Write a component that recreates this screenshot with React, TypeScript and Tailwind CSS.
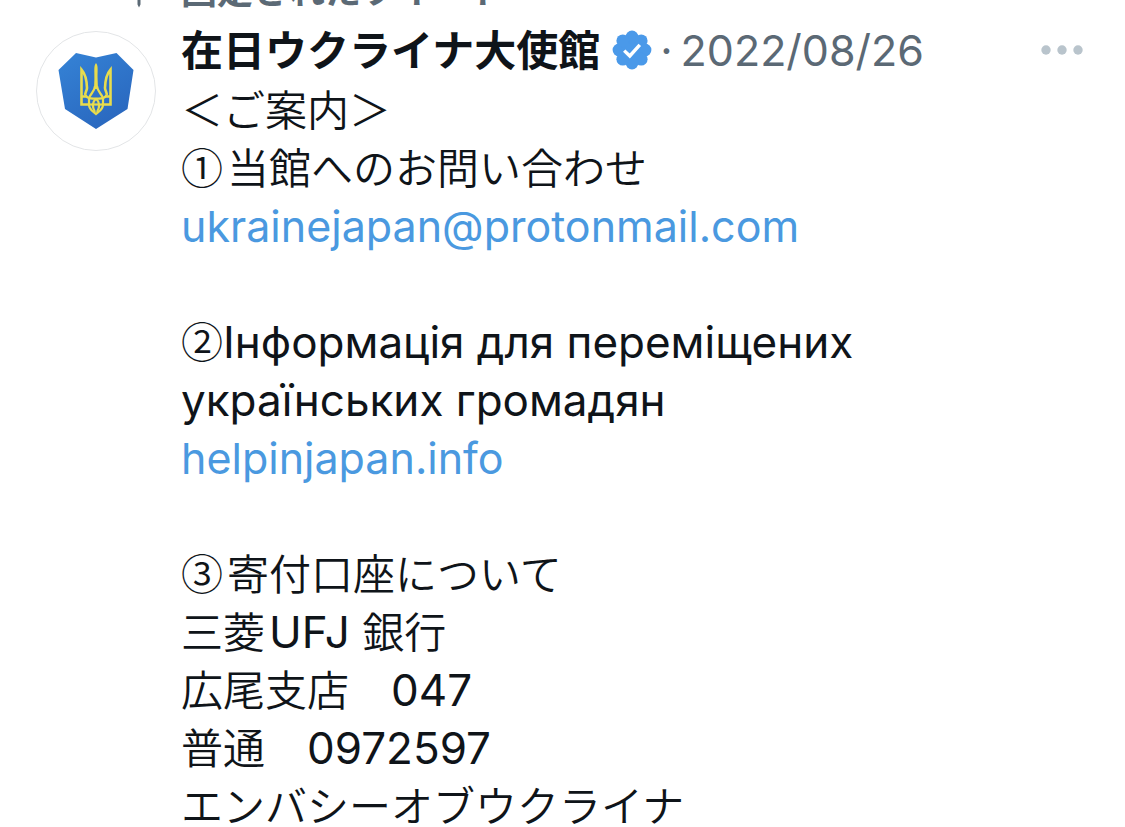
import type { ReactNode } from "react";

// A pinned tweet as it sits in a profile timeline, scrolled so that the
// "pinned" label is partly above the top edge.

// Japanese runs are set lighter and a touch smaller than the Latin and
// Cyrillic runs. leading-none keeps the taller CJK box from stretching a line.
function Ja({ children }: { children: ReactNode }) {
  return (
    <span
      lang="ja"
      className="font-['Noto_Sans_CJK_JP',sans-serif] text-[42px] leading-none font-[350]"
    >
      {children}
    </span>
  );
}

function TweetLink({ href, children }: { href: string; children: ReactNode }) {
  return (
    <a href={href} className="text-[43px] leading-none text-[#4a99e0]">
      {children}
    </a>
  );
}

function PinIcon() {
  return (
    <svg viewBox="0 0 24 24" className="size-9" fill="#5b6975" aria-hidden="true">
      <path d="M7 4.5C7 3.12 8.12 2 9.5 2h5C15.88 2 17 3.12 17 4.5v5.26L20.12 16H13v5l-1 2-1-2v-5H3.88L7 9.76V4.5z" />
    </svg>
  );
}

function VerifiedIcon() {
  return (
    <svg viewBox="0 0 40 40" className="size-10 shrink-0" role="img" aria-label="認証済みアカウント">
      <g fill="#4a99e9">
        <circle cx="20" cy="20" r="15" />
        <circle cx="20" cy="7" r="6.4" />
        <circle cx="29.2" cy="10.8" r="6.4" />
        <circle cx="33" cy="20" r="6.4" />
        <circle cx="29.2" cy="29.2" r="6.4" />
        <circle cx="20" cy="33" r="6.4" />
        <circle cx="10.8" cy="29.2" r="6.4" />
        <circle cx="7" cy="20" r="6.4" />
        <circle cx="10.8" cy="10.8" r="6.4" />
      </g>
      <path d="M12.2 20.6l5.6 5.4 10-11.2" fill="none" stroke="#fff" strokeWidth="3.4" />
    </svg>
  );
}

function Avatar() {
  return (
    <svg viewBox="0 0 120 120" className="size-[120px]" role="img" aria-label="在日ウクライナ大使館">
      <defs>
        <linearGradient id="shield" x1="0" y1="0" x2="0.6" y2="1">
          <stop offset="0" stopColor="#3583d6" />
          <stop offset="1" stopColor="#2a68bf" />
        </linearGradient>
      </defs>
      <circle cx="60" cy="60" r="59.5" fill="#fff" stroke="#e3e5e7" />
      <path d="M40 22L60 26.5 80.5 22 97.5 39 91.5 78 60 98 29 78 22.5 39z" fill="url(#shield)" />
      <g fill="none" stroke="#e8dc4c" strokeWidth="2.6">
        {/* outer prongs and base */}
        <path d="M54 73.5H45.500V38.500C49.500 43 50.800 49 51 57C51 60 48.500 62 49.500 64" />
        <path d="M66 73.5H74.500V38.500C70.500 43 69.200 49 69 57C69 60 71.500 62 70.500 64" />
        <path d="M45.500 65.500H51M74.500 65.500H69" />
      </g>
      {/* knot below the centre prong */}
      <g fill="none" stroke="#e8dc4c" strokeWidth="2.2">
        <path d="M59 55C58.500 61 54.500 62.500 53 67V73.500C53 79 57 80 60 83C63 80 67 79 67 73.500V67C65.500 62.500 61.500 61 61 55" />
        <path d="M49.500 64C51.500 68.500 56 67.500 60 67.500C64 67.500 68.500 68.500 70.500 64" />
        <path d="M53 73.500H67" />
        <path d="M60 67.500C56.500 71 56 76 59 81M60 67.500C63.500 71 64 76 61 81" />
      </g>
      <path d="M60 32C57.500 35 58.600 39 58.400 48L58 58H62L61.600 48C61.400 39 62.500 35 60 32z" fill="#e8dc4c" />
    </svg>
  );
}

export default function App() {
  return (
    <main className="h-screen overflow-hidden bg-white font-['Inter','Noto_Sans_CJK_JP',sans-serif] text-[#0f1419]">
      <article className="-mt-10 pr-[42px] pl-9">
        <div className="flex h-[62px] items-center gap-6 pl-[85px] text-[#5b6975]">
          <PinIcon />
          <span lang="ja" className="text-[36px] leading-[52px] font-bold">
            固定されたツイート
          </span>
        </div>

        <div className="flex items-start gap-[25px]">
          <div className="shrink-0 pt-[9px]">
            <Avatar />
          </div>

          <div className="min-w-0 flex-1">
            <header className="flex h-14 items-center text-[43px] leading-[56px]">
              <h1
                lang="ja"
                className="pb-1 font-['Noto_Sans_CJK_JP',sans-serif] text-[42px] leading-none font-bold"
              >
                在日ウクライナ大使館
              </h1>
              <span className="ml-3 flex items-center">
                <VerifiedIcon />
              </span>
              <span className="ml-2 text-[#5b6975]">·</span>
              <time dateTime="2022-08-26" className="ml-2 text-[#5b6975]">
                2022/08/26
              </time>
              <button type="button" aria-label="もっと見る" className="ml-auto">
                <svg viewBox="0 0 42 10" className="h-[10px] w-[42px]" fill="#b9c4cc">
                  <circle cx="5" cy="5" r="4.7" />
                  <circle cx="21" cy="5" r="4.7" />
                  <circle cx="37" cy="5" r="4.7" />
                </svg>
              </button>
            </header>

            <div className="pt-[3px] text-[44px] leading-[58px] [&_p]:min-h-[58px]">
              <p>
                <Ja>＜ご案内＞</Ja>
              </p>
              <p>
                <Ja>①</Ja>
                <span className="ml-1">
                  <Ja>当館へのお問い合わせ</Ja>
                </span>
              </p>
              <p>
                <TweetLink href="mailto:ukrainejapan@protonmail.com">
                  ukrainejapan@protonmail.com
                </TweetLink>
              </p>
              <p />
              <p lang="uk">
                <Ja>②</Ja>Інформація для переміщених
                <br />
                українських громадян
              </p>
              <p>
                <TweetLink href="https://helpinjapan.info">helpinjapan.info</TweetLink>
              </p>
              <p />
              <p>
                <Ja>③</Ja>
                <span className="ml-1">
                  <Ja>寄付口座について</Ja>
                </span>
              </p>
              <p>
                <Ja>三菱</Ja>
                <span className="ml-1">UFJ </span>
                <Ja>銀行</Ja>
              </p>
              <p>
                <Ja>広尾支店　</Ja>047
              </p>
              <p>
                <Ja>普通　</Ja>0972597
              </p>
              <p>
                <Ja>エンバシーオブウクライナ</Ja>
              </p>
            </div>
          </div>
        </div>
      </article>
    </main>
  );
}
